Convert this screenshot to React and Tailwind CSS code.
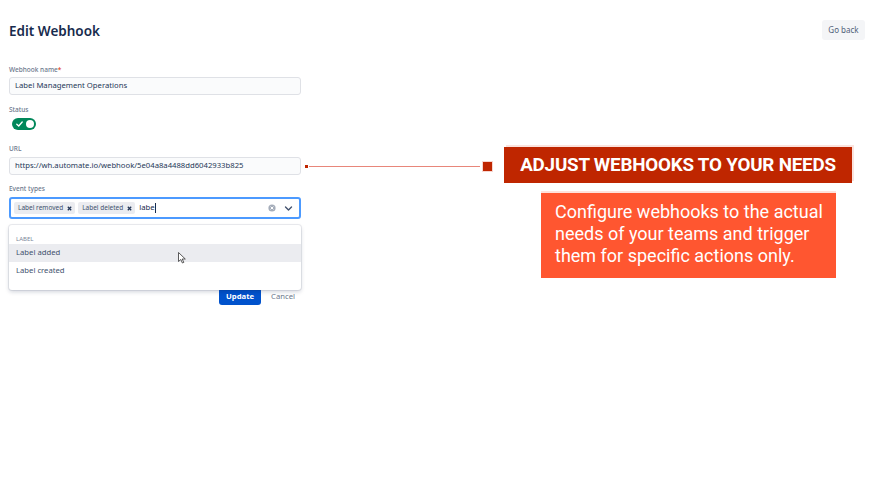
import React from "react";

function Toggle() {
  return (
    <div className="relative ml-[3px] h-[12px] w-[24px] rounded-full bg-[#00875a]">
      <svg className="absolute left-[4px] top-[3px]" width="7" height="6" viewBox="0 0 7 6">
        <path d="M0.8 3.2 L2.7 5 L6.2 1" stroke="white" strokeWidth="1.3" fill="none" strokeLinecap="round" strokeLinejoin="round" />
      </svg>
      <div className="absolute right-[2px] top-[2px] h-[8px] w-[8px] rounded-full bg-white" />
    </div>
  );
}

function Tag({ children }) {
  return (
    <div className="flex h-[12px] items-center gap-[4px] rounded-[2px] bg-[#ebecf0] pl-[4px] pr-[3px] text-[6.5px] leading-none text-[#42526e]">
      <span>{children}</span>
      <svg width="5" height="5" viewBox="0 0 5 5">
        <path d="M0.8 0.8 L4.2 4.2 M4.2 0.8 L0.8 4.2" stroke="#253858" strokeWidth="1.3" />
      </svg>
    </div>
  );
}

function Label({ children, req }) {
  return (
    <div className="text-[6.5px] font-medium leading-[10px] text-[#6b778c]">
      {children}
      {req && <span className="text-[#de350b]">*</span>}
    </div>
  );
}

export default function App() {
  return (
    <div className="relative h-[496px] w-[871px] overflow-hidden bg-white font-['Noto_Sans',sans-serif]">
      <div className="flex items-start justify-between pl-[9px] pr-[6px] pt-[20px]">
        <h1 className="mt-[1px] text-[13.5px] font-semibold leading-[20px] text-[#172b4d]">Edit Webhook</h1>
        <button className="h-[20px] w-[43px] rounded-[3px] bg-[#f4f5f7] text-[8px] text-[#505f79]">Go back</button>
      </div>

      <div className="ml-[9px] mt-[24px] flex w-[292px] flex-col">
        <Label req>Webhook name</Label>
        <div className="mt-[2px] flex h-[18px] items-center rounded-[3px] border border-[#dfe1e6] bg-[#fafbfc] pl-[5px] text-[7.7px] text-[#253858]">
          Label Management Operations
        </div>

        <div className="mt-[10px]">
          <Label>Status</Label>
        </div>
        <div className="mt-[3px]">
          <Toggle />
        </div>

        <div className="mt-[14px]">
          <Label>URL</Label>
        </div>
        <div className="mt-[3px] flex h-[18px] items-center rounded-[3px] border border-[#dfe1e6] bg-[#fafbfc] pl-[5px] text-[7.7px] text-[#253858]">
          https://wh.automate.io/webhook/5e04a8a4488dd6042933b825
        </div>

        <div className="mt-[9px]">
          <Label>Event types</Label>
        </div>
        <div className="relative mt-[3px]">
          <div className="flex h-[22px] items-center gap-[3px] rounded-[3px] border-2 border-[#4c9aff] bg-white pl-[3px] pr-[6px]">
            <Tag>Label removed</Tag>
            <Tag>Label deleted</Tag>
            <span className="ml-[1px] flex items-center text-[7.7px] text-[#172b4d]">
              labe
              <span className="inline-block h-[10px] w-px bg-[#172b4d]" />
            </span>
            <div className="flex-1" />
            <svg width="8" height="8" viewBox="0 0 8 8">
              <circle cx="4" cy="4" r="3.6" fill="#a5adba" />
              <path d="M2.6 2.6 L5.4 5.4 M5.4 2.6 L2.6 5.4" stroke="white" strokeWidth="1" />
            </svg>
            <svg className="ml-[5px]" width="9" height="9" viewBox="0 0 9 9">
              <path d="M1.5 3 L4.5 6 L7.5 3" stroke="#42526e" strokeWidth="1.4" fill="none" strokeLinecap="round" strokeLinejoin="round" />
            </svg>
          </div>

          <div className="absolute left-0 top-[28px] z-10 w-[292px] rounded-[3px] bg-white pb-[10px] pt-[9px] shadow-[0_0_0_1px_rgba(9,30,66,0.08),0_2px_4px_rgba(9,30,66,0.18)]">
            <div className="pl-[7px] text-[6px] leading-[10px] text-[#7a869a]">LABEL</div>
            <div className="relative flex h-[18px] items-center bg-[#ebecf0] pl-[7px] text-[7.7px] text-[#42526e]">
              Label added
              <svg className="absolute left-[169px] top-[8px]" width="8" height="12" viewBox="0 0 8 12">
                <path d="M0.5 0.5 L0.5 9.5 L2.8 7.5 L4.4 11 L5.8 10.4 L4.2 7 L7.3 7 Z" fill="white" stroke="#333" strokeWidth="0.8" strokeLinejoin="round" />
              </svg>
            </div>
            <div className="flex h-[18px] items-center pl-[7px] text-[7.7px] text-[#42526e]">Label created</div>
          </div>
        </div>

        <div className="mt-[69px] flex items-center justify-end gap-[10px] pr-[6px]">
          <button className="h-[17px] w-[42px] rounded-[3px] bg-[#0052cc] text-[7.7px] font-bold text-white">Update</button>
          <span className="text-[7.7px] text-[#6b778c]">Cancel</span>
        </div>
      </div>

      {/* annotation overlay */}
      <div className="absolute left-[305px] top-[165px] h-[3px] w-[3px] bg-[#bf2600]" />
      <div className="absolute left-[309px] top-[166px] h-px w-[171px] bg-[#e8867a]" />
      <div className="absolute left-[483px] top-[162px] h-[9px] w-[9px] bg-[#bf2600] shadow-[0_0_0_1px_#f7d6d0]" />
      <div className="absolute left-[504px] top-[147px] flex h-[36px] w-[348px] items-center justify-center bg-[#bf2600] font-['Roboto',sans-serif] text-[18.8px] font-bold tracking-[-0.2px] text-white shadow-[2px_-2px_0_0_#fbe3de]">
        ADJUST WEBHOOKS TO YOUR NEEDS
      </div>
      <div className="absolute left-[541px] top-[193px] h-[85px] w-[295px] bg-[#ff5630] pl-[14px] pt-[8px] font-['Roboto',sans-serif] text-[18px] leading-[22px] text-white shadow-[0_-2px_0_0_#ffe2db]">
        Configure webhooks to the actual needs of your teams and trigger them for specific actions only.
      </div>
    </div>
  );
}
